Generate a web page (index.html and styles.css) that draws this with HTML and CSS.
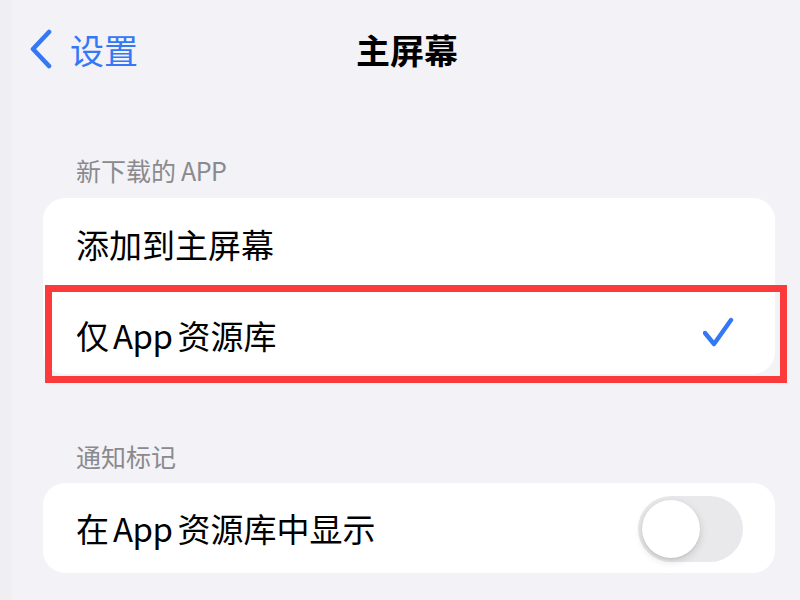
FILE: index.html
```html
<!DOCTYPE html>
<html lang="zh-CN">
<head>
    <meta charset="UTF-8">
    <meta name="viewport" content="width=device-width, initial-scale=1.0">
    <title>主屏幕</title>
    <link rel="stylesheet" href="styles.css">
</head>
<body>
    <div class="screen">
        <div class="navbar">
            <a href="#" class="back">
                <svg viewBox="0 0 24 40" fill="none" stroke="currentColor" stroke-width="4.6" stroke-linecap="round" stroke-linejoin="round">
                    <polyline points="20 3 4 20 20 37"></polyline>
                </svg>
                设置
            </a>
            <h1 class="title">主屏幕</h1>
        </div>

        <div class="section-title">新下载的<span class="latin">APP</span></div>
        <div class="group">
            <div class="row row-first">添加到主屏幕</div>
            <div class="row row-selected">
                <span>仅<span class="latin">App</span>资源库</span>
                <svg class="check" viewBox="0 0 32 32" fill="none" stroke="currentColor" stroke-width="4.4" stroke-linecap="round" stroke-linejoin="round">
                    <polyline points="2 16 11 27 28 3"></polyline>
                </svg>
                <div class="highlight"></div>
            </div>
        </div>

        <div class="section-title second">通知标记</div>
        <div class="group">
            <div class="row row-single">
                <span>在<span class="latin">App</span>资源库中显示</span>
                <div class="switch"><div class="knob"></div></div>
            </div>
        </div>
    </div>
</body>
</html>
```

FILE: styles.css
```css
* {
    margin: 0;
    padding: 0;
    box-sizing: border-box;
    font-family: "Noto Sans CJK SC", "Noto Sans", sans-serif;
}

body {
    background: #f2f2f7;
    width: 800px;
    height: 600px;
    overflow: hidden;
}

.screen {
    height: 600px;
    border-left: 11px solid #efeff1;
    padding: 0 25px 0 32px;
}

.navbar {
    height: 98px;
    display: flex;
    align-items: center;
    position: relative;
}

.back {
    display: flex;
    align-items: center;
    gap: 17px;
    color: #3478f6;
    text-decoration: none;
    font-size: 34px;
    margin-left: -14px;
    z-index: 1;
}

.back svg {
    width: 24px;
    height: 40px;
}

.title {
    position: absolute;
    left: 0;
    right: 0;
    text-align: center;
    font-size: 34px;
    font-weight: 700;
    color: #000;
    margin-left: -4px;
}

.latin {
    margin: 0 5px 0 4px;
    letter-spacing: -0.5px;
}

.section-title .latin {
    margin: 0 0 0 5px;
}

.section-title {
    font-size: 25px;
    line-height: 30px;
    color: #8a8a8e;
    margin: 57px 0 13px 33px;
}

.section-title.second {
    margin-top: 67px;
    margin-bottom: 12px;
}

.group {
    background: #fff;
    border-radius: 22px;
}

.row {
    display: flex;
    align-items: center;
    justify-content: space-between;
    padding: 0 32px 0 33px;
    font-size: 33px;
    color: #000;
    position: relative;
}

.row-first {
    height: 92px;
}

.row-selected {
    height: 84px;
    padding-top: 6px;
}

.row-single {
    height: 90px;
    padding-right: 32px;
}

.check {
    width: 32px;
    height: 32px;
    color: #3478f6;
    margin-right: 8px;
    margin-top: -4px;
}

.highlight {
    position: absolute;
    left: 2px;
    top: -5px;
    right: -12px;
    bottom: -9px;
    border: 7px solid #fb3a3c;
    pointer-events: none;
}

.switch {
    width: 105px;
    height: 66px;
    border-radius: 33px;
    background: #e9e9eb;
    padding: 4px;
    margin-top: 2px;
}

.knob {
    width: 58px;
    height: 58px;
    border-radius: 50%;
    background: #fff;
    box-shadow: 0 3px 8px rgba(0, 0, 0, 0.15), 0 1px 2px rgba(0, 0, 0, 0.08);
}
```
